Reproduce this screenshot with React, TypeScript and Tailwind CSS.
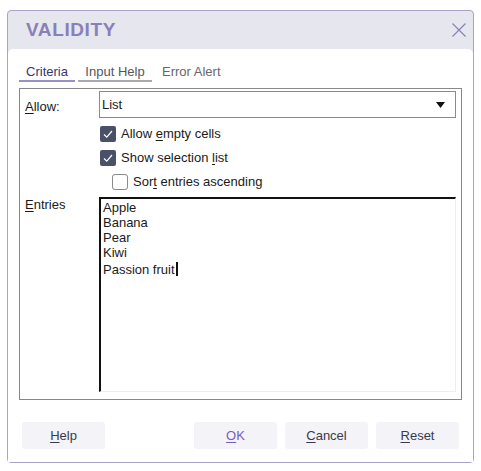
const font = { fontFamily: '"Liberation Sans", Arial, sans-serif' }

const Check = ({ checked }: { checked: boolean }) =>
  checked ? (
    <span className="flex h-4 w-4 items-center justify-center rounded-[2px] bg-[#4a5068]">
      <svg width="12" height="12" viewBox="0 0 12 12" fill="none">
        <path d="M2 6.5 L4.8 9.2 L10 3" stroke="#ffffff" strokeWidth="1.2" />
      </svg>
    </span>
  ) : (
    <span className="h-4 w-4 rounded-[3px] border border-[#8a8a8a] bg-white" />
  )

const Btn = ({ u, rest, accent }: { u: string; rest: string; accent?: boolean }) => (
  <button
    className={
      'h-[27px] w-[83px] rounded-[3px] bg-[#f3f3f8] text-[13px] ' +
      (accent ? 'text-[#7a5cc0]' : 'text-[#3a3a4a]')
    }
  >
    <span className="underline underline-offset-[2px]">{u}</span>
    {rest}
  </button>
)

const App = () => {
  const entries = ['Apple', 'Banana', 'Pear', 'Kiwi', 'Passion fruit']
  return (
    <div className="h-[471px] w-[481px] bg-white pl-[7px] pt-[10px]" style={font}>
      <div className="flex h-[453px] w-[467px] flex-col rounded-[4px] border border-[#a9a3c8] bg-[#e6e6ee]">
        <div className="flex h-[38px] items-center justify-between pl-[18px] pr-[6px]">
          <span className="text-[19px] font-bold tracking-[0.6px] text-[#8a80b8]">VALIDITY</span>
          <svg width="16" height="16" viewBox="0 0 16 16" fill="none">
            <path d="M1.5 1.5 L14.5 14.5 M14.5 1.5 L1.5 14.5" stroke="#8a80b8" strokeWidth="1.2" />
          </svg>
        </div>
        <div className="flex flex-1 flex-col rounded-t-[5px] bg-white pl-[11px] pr-[10px] pt-[15px]">
          <div className="flex h-[18px] items-start text-[13px]">
            <div className="flex w-[56px] flex-col items-center">
              <span className="leading-[15px] text-[#3d3470]">Criteria</span>
              <span className="mt-[1px] h-[2px] w-full bg-[#9a90c8]" />
            </div>
            <div className="ml-[3px] flex w-[74px] flex-col items-center">
              <span className="leading-[15px] text-[#555560]">Input Help</span>
              <span className="mt-[1px] h-[2px] w-full bg-[#a8a8b4]" />
            </div>
            <span className="ml-[10px] leading-[15px] text-[#666670]">Error Alert</span>
          </div>
          <div className="mt-[6px] flex h-[312px] w-[443px] flex-col overflow-hidden border border-[#888888] pl-[5px] pr-[5px] pt-[2px] text-[13px] text-[#1a1a1a]">
            <div className="flex items-start">
              <span className="w-[74px] pt-[6px]">
                <span className="underline underline-offset-[2px]">A</span>llow:
              </span>
              <div className="flex h-[27px] flex-1 items-center justify-between border border-[#8a8a8a] pl-[2px] pr-[10px]">
                <span>List</span>
                <svg width="9" height="6" viewBox="0 0 9 6">
                  <path d="M0 0 H9 L4.5 6 Z" fill="#111111" />
                </svg>
              </div>
            </div>
            <div className="ml-[75px] mt-[8px] flex flex-col gap-[8px] leading-[16px]">
              <label className="flex items-center gap-[5px]">
                <Check checked />
                <span>
                  Allow <span className="underline underline-offset-[2px]">e</span>mpty cells
                </span>
              </label>
              <label className="flex items-center gap-[5px]">
                <Check checked />
                <span>
                  Show selection <span className="underline underline-offset-[2px]">l</span>ist
                </span>
              </label>
              <label className="ml-[12px] flex items-center gap-[5px]">
                <Check checked={false} />
                <span>
                  Sor<span className="underline underline-offset-[2px]">t</span> entries ascending
                </span>
              </label>
            </div>
            <div className="mt-[7px] flex items-start">
              <span className="w-[74px] leading-[15px]">
                <span className="underline underline-offset-[2px]">E</span>ntries
              </span>
              <div className="h-[195px] flex-1 border-l-2 border-t-2 border-b border-r border-l-[#111111] border-t-[#111111] border-b-[#eeeeee] border-r-[#eeeeee] pl-[2px] pt-[1px] leading-[15px]">
                {entries.map((e, i) => (
                  <div key={e}>
                    {e}
                    {i === entries.length - 1 && (
                      <span className="ml-[1px] inline-block h-[14px] w-[2px] translate-y-[2px] bg-[#111111]" />
                    )}
                  </div>
                ))}
              </div>
            </div>
          </div>
          <div className="mt-[22px] flex pl-[3px]">
            <Btn u="H" rest="elp" />
            <div className="ml-[89px] flex gap-[8px]">
              <Btn u="O" rest="K" accent />
              <Btn u="C" rest="ancel" />
              <Btn u="R" rest="eset" />
            </div>
          </div>
        </div>
      </div>
    </div>
  )
}

export default App
